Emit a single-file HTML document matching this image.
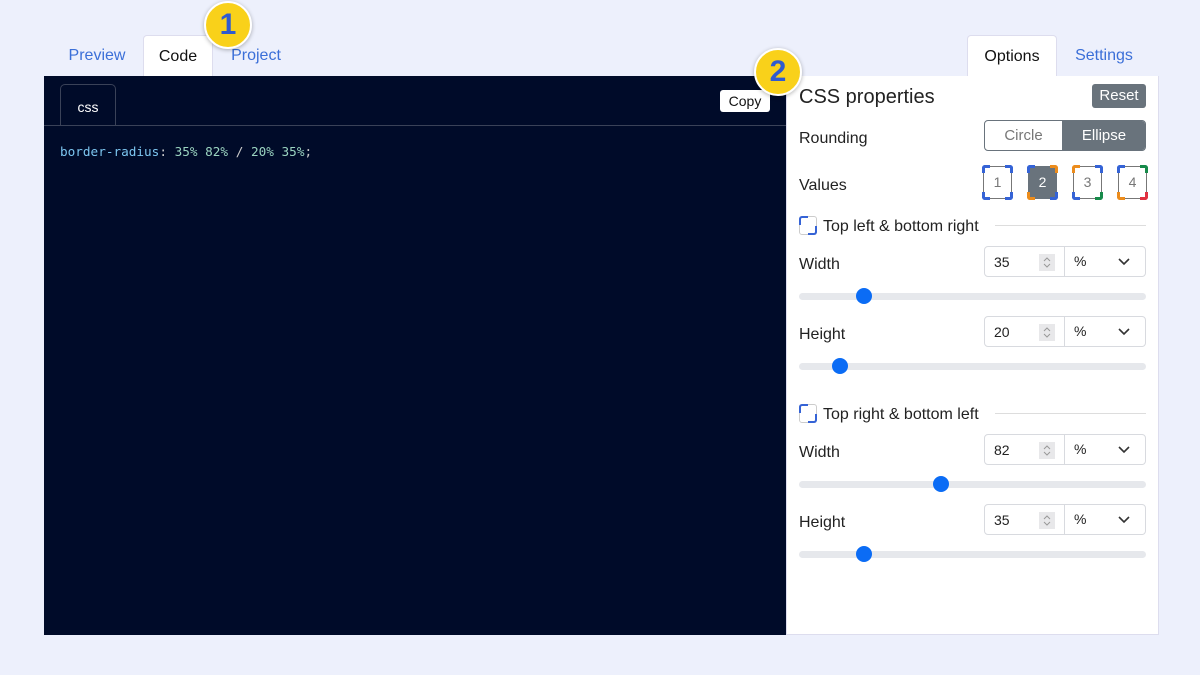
<!DOCTYPE html>
<html><head><meta charset="utf-8"><style>
*{box-sizing:border-box;margin:0;padding:0}
body{width:1200px;height:675px;background:#edf0fc;font-family:"Liberation Sans",sans-serif;position:relative;overflow:hidden;color:#222}
.a{position:absolute}
.tab{position:absolute;font-size:16px;color:#3b6fd8;text-align:center;line-height:42px;top:35px;height:41px}
.tab.on{background:#fff;color:#111;border:1px solid #dde;border-bottom:none;border-radius:4px 4px 0 0}
.badge{position:absolute;width:48px;height:48px;border-radius:50%;background:#f9d11a;border:2px solid #fff;box-shadow:0 1px 4px rgba(0,0,0,.3);color:#2f5bd0;font-size:30px;font-weight:bold;text-align:center;line-height:44px}
.lbl{position:absolute;left:799px;font-size:16px;color:#222}
.vb{position:absolute;top:166px;width:29px;height:33px;border:1px solid #777;border-radius:3px;font-size:14px;color:#777;text-align:center;line-height:31px}
.vb i{position:absolute;width:8px;height:8px;border-style:solid;border-width:0}
.tl{left:-2px;top:-2px;border-top-width:3px!important;border-left-width:3px!important;border-radius:3px 0 0 0}
.tr{right:-2px;top:-2px;border-top-width:3px!important;border-right-width:3px!important;border-radius:0 3px 0 0}
.bl{left:-2px;bottom:-2px;border-bottom-width:3px!important;border-left-width:3px!important;border-radius:0 0 0 3px}
.br{right:-2px;bottom:-2px;border-bottom-width:3px!important;border-right-width:3px!important;border-radius:0 0 3px 0}
.B{border-color:#3563d6}.O{border-color:#ec8c1c}.G{border-color:#178a4a}.R{border-color:#e03040}
.inp{position:absolute;left:984px;width:162px;height:31px;border:1px solid #d8dadf;border-radius:4px;background:#fff;font-size:14px}
.inp .n{position:absolute;left:9px;top:7px}
.inp .sp{position:absolute;left:54px;top:7px;width:16px;height:17px;background:#e8e8ea}
.inp .sp svg{position:absolute;left:3px;top:2px}
.inp .sep{position:absolute;left:79px;top:0;bottom:0;border-left:1px solid #d8dadf}
.inp .u{position:absolute;left:89px;top:6px}
.inp .dd{position:absolute;left:133px;top:11px}
.trk{position:absolute;left:799px;width:347px;height:7px;background:#e6e8ec;border-radius:4px}
.th{position:absolute;width:16px;height:16px;border-radius:50%;background:#0b6cf5;top:-5px}
.sec{position:absolute;left:799px;font-size:16px}
.sec .ic{position:absolute;left:0;top:0;width:18px;height:19px;border:1px solid #ccc;border-radius:3px}
.sec .ic:before{content:"";position:absolute;left:-1px;top:-1px;width:7px;height:7px;border-top:2px solid #3563d6;border-left:2px solid #3563d6;border-radius:3px 0 0 0}
.sec .ic:after{content:"";position:absolute;right:-1px;bottom:-1px;width:7px;height:7px;border-bottom:2px solid #3563d6;border-right:2px solid #3563d6;border-radius:0 0 3px 0}
.sec span{position:absolute;left:24px;top:1px;white-space:nowrap;line-height:19px}
.sec .ln{position:absolute;top:9px;height:1px;background:#ddd}
</style></head><body>
<div class="tab" style="left:60px;width:74px">Preview</div>
<div class="tab on" style="left:143px;width:70px">Code</div>
<div class="tab" style="left:222px;width:68px">Project</div>
<div class="tab on" style="left:967px;width:90px">Options</div>
<div class="tab" style="left:1064px;width:80px">Settings</div>

<div class="a" style="left:44px;top:76px;width:742px;height:559px;background:#000b29"></div>
<div class="a" style="left:60px;top:84px;width:56px;height:42px;border:1px solid #3a4258;border-bottom:none;border-radius:5px 5px 0 0;background:#000b29;color:#fff;font-size:14px;text-align:center;line-height:44px">css</div>
<div class="a" style="left:44px;top:125px;width:742px;height:1px;background:#3a4258"></div>
<div class="a" style="left:60px;top:144px;font-family:'DejaVu Sans Mono','Liberation Mono',monospace;font-size:12.7px;color:#9ad4c0"><span style="color:#7cc6f0">border-radius</span><span style="color:#ccc">:</span> 35% 82% <span style="color:#ccc">/</span> 20% 35%<span style="color:#ccc">;</span></div>
<div class="a" style="left:720px;top:90px;width:50px;height:22px;background:#fff;border-radius:3px;font-size:14px;text-align:center;line-height:22px;color:#111">Copy</div>

<div class="a" style="left:786px;top:76px;width:373px;height:559px;background:#fff;border:1px solid #dde;border-top:none"></div>
<div class="a" style="left:799px;top:86px;font-size:20px;color:#222">CSS properties</div>
<div class="a" style="left:1092px;top:84px;width:54px;height:24px;background:#69737c;color:#fff;border-radius:3px;font-size:15px;text-align:center;line-height:24px">Reset</div>
<div class="lbl" style="top:130px">Rounding</div>
<div class="a" style="left:984px;top:120px;width:162px;height:31px;border:1px solid #69737c;border-radius:4px;overflow:hidden;font-size:15px">
<div class="a" style="left:0;top:0;width:77px;height:29px;color:#777;text-align:center;line-height:29px">Circle</div>
<div class="a" style="left:77px;top:0;width:84px;height:29px;background:#69737c;color:#fff;text-align:center;line-height:29px">Ellipse</div></div>
<div class="lbl" style="top:177px">Values</div>
<div class="vb" style="left:983px">1<i class="tl B"></i><i class="tr B"></i><i class="bl B"></i><i class="br B"></i></div>
<div class="vb" style="left:1028px;background:#69737c;color:#fff;border-color:#69737c">2<i class="tl B"></i><i class="tr O"></i><i class="bl O"></i><i class="br B"></i></div>
<div class="vb" style="left:1073px">3<i class="tl O"></i><i class="tr B"></i><i class="bl B"></i><i class="br G"></i></div>
<div class="vb" style="left:1118px">4<i class="tl B"></i><i class="tr G"></i><i class="bl O"></i><i class="br R"></i></div>

<div class="sec" style="top:216px"><div class="ic"></div><span>Top left &amp; bottom right</span><div class="ln" style="left:196px;width:151px"></div></div>
<div class="lbl" style="top:256px">Width</div>
<div class="inp" style="top:246px"><span class="n">35</span><div class="sp"><svg width="10" height="13"><path d="M2 5l3-3 3 3M2 8l3 3 3-3" fill="none" stroke="#999" stroke-width="1"/></svg></div><div class="sep"></div><span class="u">%</span><svg class="dd" width="12" height="8"><path d="M1 1l5 5 5-5" fill="none" stroke="#333" stroke-width="1.6"/></svg></div>
<div class="trk" style="top:293px"><div class="th" style="left:57px"></div></div>
<div class="lbl" style="top:326px">Height</div>
<div class="inp" style="top:316px"><span class="n">20</span><div class="sp"><svg width="10" height="13"><path d="M2 5l3-3 3 3M2 8l3 3 3-3" fill="none" stroke="#999" stroke-width="1"/></svg></div><div class="sep"></div><span class="u">%</span><svg class="dd" width="12" height="8"><path d="M1 1l5 5 5-5" fill="none" stroke="#333" stroke-width="1.6"/></svg></div>
<div class="trk" style="top:363px"><div class="th" style="left:33px"></div></div>

<div class="sec" style="top:404px"><div class="ic"></div><span>Top right &amp; bottom left</span><div class="ln" style="left:196px;width:151px"></div></div>
<div class="lbl" style="top:444px">Width</div>
<div class="inp" style="top:434px"><span class="n">82</span><div class="sp"><svg width="10" height="13"><path d="M2 5l3-3 3 3M2 8l3 3 3-3" fill="none" stroke="#999" stroke-width="1"/></svg></div><div class="sep"></div><span class="u">%</span><svg class="dd" width="12" height="8"><path d="M1 1l5 5 5-5" fill="none" stroke="#333" stroke-width="1.6"/></svg></div>
<div class="trk" style="top:481px"><div class="th" style="left:134px"></div></div>
<div class="lbl" style="top:514px">Height</div>
<div class="inp" style="top:504px"><span class="n">35</span><div class="sp"><svg width="10" height="13"><path d="M2 5l3-3 3 3M2 8l3 3 3-3" fill="none" stroke="#999" stroke-width="1"/></svg></div><div class="sep"></div><span class="u">%</span><svg class="dd" width="12" height="8"><path d="M1 1l5 5 5-5" fill="none" stroke="#333" stroke-width="1.6"/></svg></div>
<div class="trk" style="top:551px"><div class="th" style="left:57px"></div></div>

<div class="badge" style="left:204px;top:1px">1</div>
<div class="badge" style="left:754px;top:48px">2</div>
</body></html>
